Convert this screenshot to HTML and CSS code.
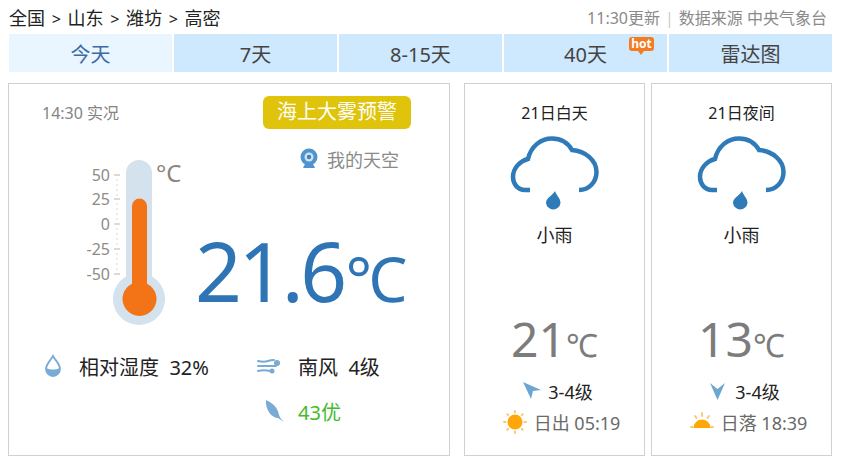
FILE: index.html
```html
<!DOCTYPE html>
<html lang="zh">
<head>
    <meta charset="utf-8">
    <title>高密天气</title>
    <link rel="stylesheet" href="styles.css">
</head>
<body>
    <div class="topbar">
        <div class="crumbs">全国 <span class="sep">&gt;</span> 山东 <span class="sep">&gt;</span> 潍坊 <span class="sep">&gt;</span> 高密</div>
        <div class="source">11:30更新<span class="bar">|</span>数据来源 中央气象台</div>
    </div>

    <div class="tabs">
        <div class="tab active">今天</div>
        <div class="tab">7天</div>
        <div class="tab">8-15天</div>
        <div class="tab">40天
            <span class="hot">hot</span>
        </div>
        <div class="tab">雷达图</div>
    </div>

    <div class="content">
        <div class="panel now">
            <div class="now-head">
                <span class="now-time">14:30 实况</span>
                <span class="warn">海上大雾预警</span>
            </div>
            <div class="hero">
                <svg class="thermo" width="110" height="176" viewBox="0 -8 110 176">
                    <path d="M41 13a13 13 0 0 1 26 0V116.500A26 26 0 1 1 41 116.500z" fill="#d3e2ec"/>
                    <path d="M47 46a7.500 7.500 0 0 1 15 0V123.700A17 17 0 1 1 47 123.700z" fill="#f27417"/>
                    <path d="M29 15h6M29 39h6M29 64h6M29 89h6M29 114h6" stroke="#b9b4ae"/>
                    <path d="M31 20h2M31 25h2M31 30h2M31 35h2M31 44h2M31 49h2M31 54h2M31 59h2M31 69h2M31 74h2M31 79h2M31 84h2M31 94h2M31 99h2M31 104h2M31 109h2" stroke="#d8d5d1"/>
                    <g class="scale" text-anchor="end">
                        <text x="25" y="21">50</text>
                        <text x="25" y="45">25</text>
                        <text x="25" y="70">0</text>
                        <text x="25" y="95">-25</text>
                        <text x="25" y="120">-50</text>
                    </g>
                    <text class="unit" x="71" y="22">°C</text>
                </svg>
                <div class="hero-right">
                    <div class="sky">
                        <svg width="18" height="22" viewBox="0 0 18 22">
                            <circle cx="9" cy="9" r="8.500" fill="#4f94cf"/>
                            <circle cx="9" cy="9" r="4.500" fill="#cfe3f3"/>
                            <circle cx="9" cy="9" r="2.200" fill="#3f82bd"/>
                            <path d="M3 20h12l-2-4H5z" fill="#4f94cf"/>
                        </svg>
                        <span>我的天空</span>
                    </div>
                    <div class="big-temp">21.6<span class="big-unit">℃</span></div>
                </div>
            </div>
            <div class="stats">
                <div class="stat-col">
                    <div class="stat">
                        <svg class="stat-icon" width="18" height="24" viewBox="0 0 18 24">
                            <path d="M9 2c2 4 7 8 7 13a7 7 0 0 1-14 0C2 10 7 6 9 2z" fill="#fff" stroke="#79abd4" stroke-width="1.800"/>
                            <path d="M2.500 14c4 2 9 2 13 0 1 5-3 8-6.500 8s-7.500-3-6.500-8z" fill="#79abd4"/>
                        </svg>
                        <span class="stat-text">相对湿度&nbsp; 32%</span>
                    </div>
                </div>
                <div class="stat-col">
                    <div class="stat">
                        <svg class="stat-icon" width="24" height="20" viewBox="0 0 24 20">
                            <g fill="none" stroke="#79abd4" stroke-width="2" stroke-linecap="round">
                                <path d="M1 5c4 1 7 1 10 0s4-1 6-1"/>
                                <path d="M1 10h18"/>
                                <path d="M1 15c4-1 8-1 12 0"/>
                            </g>
                            <circle cx="20" cy="7" r="3" fill="#79abd4"/>
                            <circle cx="15" cy="15" r="2.500" fill="#79abd4"/>
                        </svg>
                        <span class="stat-text">南风&nbsp; 4级</span>
                    </div>
                    <div class="stat">
                        <svg class="stat-icon leaf" width="20" height="24" viewBox="0 0 20 24">
                            <path d="M1 1c7 3 12 8 13 15 1 3 3 5 5 7-2-1-4-3-6-4C7 19 0 11 1 1z" fill="#79abd4"/>
                        </svg>
                        <span class="stat-text good">43优</span>
                    </div>
                </div>
            </div>
        </div>

        <div class="panel day">
            <div class="day-title">21日白天</div>
            <svg class="rain" width="90" height="78" viewBox="0 0 90 78">
                <path d="M20 55H15C7 55 3 48 3 42 3 33 10 26 18 24 21 11 31 3.500 42 3.500 51 3.500 58 8 62 15 75 16 86.500 25 86.500 37 86.500 47 79 55 69 55" fill="none" stroke="#2f7ab8" stroke-width="4.500"/>
                <path d="M45 56C46 60 50.500 63 50.500 68A7.300 7.300 0 0 1 36 68C36 63 42 61 45 56z" fill="#2f7ab8"/>
            </svg>
            <div class="weather">小雨</div>
            <div class="day-temp">21<span class="day-unit">℃</span></div>
            <div class="wind">
                <svg width="20" height="20" viewBox="0 0 20 20"><path d="M1 1L19 9 11 10 9 18z" fill="#6ea6d2"/></svg>
                <span>3-4级</span>
            </div>
            <div class="sun">
                <svg width="24" height="24" viewBox="0 0 24 24">
                    <circle cx="12" cy="12" r="7.500" fill="#ffa708"/>
                    <g stroke="#fbc468" stroke-width="1.800" stroke-linecap="round">
                        <path d="M12 1v1.500M12 21.500V23M1 12h1.500M21.500 12H23M4.200 4.200L5.200 5.200M18.800 18.800l1 1M4.200 19.800L5.200 18.800M18.800 5.200l1-1"/>
                    </g>
                </svg>
                <span>日出 05:19</span>
            </div>
        </div>

        <div class="panel day">
            <div class="day-title">21日夜间</div>
            <svg class="rain" width="90" height="78" viewBox="0 0 90 78">
                <path d="M20 55H15C7 55 3 48 3 42 3 33 10 26 18 24 21 11 31 3.500 42 3.500 51 3.500 58 8 62 15 75 16 86.500 25 86.500 37 86.500 47 79 55 69 55" fill="none" stroke="#2f7ab8" stroke-width="4.500"/>
                <path d="M45 56C46 60 50.500 63 50.500 68A7.300 7.300 0 0 1 36 68C36 63 42 61 45 56z" fill="#2f7ab8"/>
            </svg>
            <div class="weather">小雨</div>
            <div class="day-temp">13<span class="day-unit">℃</span></div>
            <div class="wind">
                <svg width="20" height="20" viewBox="0 0 20 20"><path d="M1 2L8.500 8 16 2 8.500 19z" fill="#6ea6d2"/></svg>
                <span>3-4级</span>
            </div>
            <div class="sun">
                <svg width="24" height="24" viewBox="0 0 24 24">
                    <path d="M3.500 18a8.500 8.500 0 0 1 17 0z" fill="#ffa708"/>
                    <g stroke="#fbc468" stroke-width="1.800" stroke-linecap="round">
                        <path d="M12 3v3M1 17h1.500M21.500 17H23M5 6l1.500 2M19 6l-1.500 2"/>
                    </g>
                </svg>
                <span>日落 18:39</span>
            </div>
        </div>
    </div>
</body>
</html>
```

FILE: styles.css
```css
* {
    margin: 0;
    box-sizing: border-box;
}
body {
    width: 845px;
    height: 470px;
    padding: 0 13px 0 9px;
    overflow: hidden;
    background-color: #fff;
    font-family: "Noto Sans", "Noto Sans CJK SC", sans-serif;
    color: #333;
}
.topbar {
    display: flex;
    justify-content: space-between;
    align-items: center;
    height: 34px;
    padding-right: 5px;
}
.crumbs {
    font-size: 18px;
    color: #222;
}
.sep {
    font-size: 16px;
    margin: 0 2px;
}
.source {
    font-size: 16px;
    color: #8a8a8a;
}
.bar {
    margin: 0 5px;
    color: #ccc;
}
.tabs {
    display: flex;
    gap: 2px;
    height: 38px;
}
.tab {
    position: relative;
    flex: 1;
    display: flex;
    align-items: center;
    justify-content: center;
    background-color: #cee8fd;
    font-size: 20px;
    color: #444;
}
.tab.active {
    background-color: #e9f5ff;
    color: #3d6aa6;
}
.hot {
    position: absolute;
    top: 3px;
    right: 13px;
    width: 25px;
    height: 14px;
    border-radius: 3px;
    background-color: #f57a20;
    color: #fff;
    font-size: 12px;
    font-weight: 700;
    line-height: 13px;
    text-align: center;
}
.hot::after {
    content: "";
    position: absolute;
    left: 9px;
    top: 14px;
    border-top: 4px solid #f57a20;
    border-left: 3px solid transparent;
    border-right: 3px solid transparent;
}
.content {
    display: flex;
    margin-top: 11px;
    height: 373px;
}
.panel {
    border: 1px solid #d0d0d0;
}
.now {
    width: 442px;
    margin-right: 14px;
    margin-left: -1px;
    padding: 11px 0 0 0;
}
.now-head {
    display: flex;
    justify-content: space-between;
    align-items: center;
    height: 34px;
    padding: 0 38px 0 33px;
}
.now-time {
    font-size: 16px;
    color: #848484;
}
.warn {
    width: 148px;
    height: 33px;
    border-radius: 6px;
    background-color: #e0c30b;
    color: #fff;
    font-size: 20px;
    line-height: 32px;
    text-align: center;
}
.hero {
    display: flex;
    height: 186px;
    margin-top: 19px;
    padding-left: 76px;
}
.thermo {
    flex-shrink: 0;
    margin-top: 4px;
}
.scale text {
    font-size: 16px;
    fill: #8f8a84;
}
.unit {
    font-size: 24px;
    fill: #8c857e;
}
.hero-right {
    display: flex;
    flex-direction: column;
}
.sky {
    display: flex;
    align-items: center;
    gap: 9px;
    height: 22px;
    margin-left: 105px;
    font-size: 18px;
    color: #8a8a8a;
}
.big-temp {
    margin-top: 50px;
    font-size: 82px;
    line-height: 100px;
    letter-spacing: -3.500px;
    color: #2f75b5;
    white-space: nowrap;
}
.big-unit {
    margin-left: 2px;
    font-size: 62px;
    letter-spacing: 0;
}
.stats {
    display: flex;
    margin-top: 20px;
    padding-left: 35px;
}
.stat-col {
    flex-shrink: 0;
    width: 213px;
}
.stat {
    display: flex;
    align-items: center;
    height: 24px;
    margin-bottom: 21px;
}
.stat-icon {
    flex-shrink: 0;
}
.stat-text {
    margin-left: 17px;
    font-size: 20px;
    color: #222;
}
.stat-icon.leaf {
    margin-left: 8px;
}
.leaf + .stat-text {
    margin-left: 13px;
}
.stat-text.good {
    color: #44bb2a;
}
.day {
    width: 181px;
    display: flex;
    flex-direction: column;
    align-items: center;
    padding: 18px 0 0 6px;
}
.day + .day {
    margin-left: 6px;
}
.day-title {
    margin-left: -6px;
    font-size: 16px;
    color: #222;
    line-height: 22px;
}
.rain {
    margin: 11px 0 0 -6px;
}
.weather {
    margin: 10px 0 0 -6px;
    font-size: 18px;
    line-height: 24px;
    color: #222;
}
.day-temp {
    margin: 59px 0 0 -6px;
    font-size: 48px;
    line-height: 66px;
    color: #7c7c7c;
}
.day-unit {
    font-size: 32px;
}
.wind {
    display: flex;
    align-items: center;
    gap: 6px;
    height: 24px;
    margin-top: 1px;
    font-size: 18px;
    color: #222;
}
.sun {
    display: flex;
    align-items: center;
    gap: 7px;
    height: 24px;
    margin: 7px 0 0 8px;
    font-size: 18px;
    color: #6a6a6a;
}
```
